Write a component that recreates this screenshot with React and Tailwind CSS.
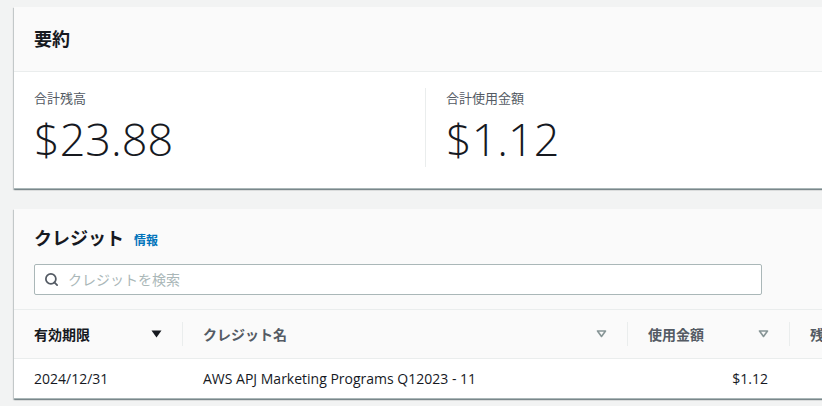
import { Search } from "lucide-react";

const font = { fontFamily: '"Open Sans", "Noto Sans CJK JP", sans-serif' };

const cardShadow =
  "shadow-[0_1px_1px_0_rgba(0,28,36,0.3),1px_1px_1px_0_rgba(0,28,36,0.15),-1px_1px_1px_0_rgba(0,28,36,0.15)]";

const SortDown = ({ active }) => (
  <svg width="11" height="8" viewBox="0 0 11 8" className="shrink-0">
    {active ? (
      <path d="M0.5 0.5 H10.5 L5.5 7.5 Z" fill="#16191f" />
    ) : (
      <path d="M1.5 1 H9.5 L5.5 6.5 Z" fill="none" stroke="#879596" strokeWidth="1.6" strokeLinejoin="round" />
    )}
  </svg>
);

const Summary = () => (
  <div className={`bg-white ${cardShadow} border-b border-[#aab7b8]`}>
    <div className="h-[65px] px-5 flex items-center bg-[#fafafa] border-b border-[#eaeded]">
      <h2 className="text-[18px] font-bold text-[#16191f]">要約</h2>
    </div>
    <div className="grid grid-cols-2 pt-4 pb-[21px]">
      <div className="px-5">
        <div className="text-[13px] leading-5 text-[#545b64]">合計残高</div>
        <div className="mt-[3px] text-[45px] leading-[56px] font-light text-[#16191f]">$23.88</div>
      </div>
      <div className="px-5 border-l border-[#eaeded]">
        <div className="text-[13px] leading-5 text-[#545b64]">合計使用金額</div>
        <div className="mt-[3px] text-[45px] leading-[56px] font-light text-[#16191f]">$1.12</div>
      </div>
    </div>
  </div>
);

const HeaderCell = ({ label, width, last }) => (
  <div className={`${width} shrink-0 h-full flex items-center pl-5`}>
    <div className={`flex-1 flex items-center justify-between pr-5 ${last ? "" : "border-r border-[#eaeded]"} h-[24px]`}>
      <span className="text-[14px] font-bold text-[#545b64]">{label}</span>
      {!last && <SortDown />}
    </div>
  </div>
);

const Credits = () => (
  <div className={`bg-white ${cardShadow} border-b border-[#aab7b8]`}>
    <div className="bg-[#fafafa] px-5 pt-[15px] pb-[14px] border-b border-[#eaeded]">
      <div className="flex items-baseline gap-[10px] h-[40px] pt-[1px]">
        <h2 className="text-[18px] font-bold text-[#16191f]">クレジット</h2>
        <a className="text-[12px] font-bold text-[#0073bb]">情報</a>
      </div>
      <div className="w-[728px] h-[31px] bg-white border border-[#aab7b8] rounded-[2px] flex items-center px-[9px] gap-[9px]">
        <Search size={15} strokeWidth={2.8} className="text-[#545b64]" />
        <span className="text-[14px] text-[#aab7b8]">クレジットを検索</span>
      </div>
    </div>
    <div className="flex h-[49px] bg-[#fafafa] border-b border-[#eaeded]">
      <div className="w-[169px] shrink-0 h-full flex items-center pl-5">
        <div className="flex-1 flex items-center justify-between pr-5 border-r border-[#eaeded] h-[24px]">
          <span className="text-[14px] font-bold text-[#16191f]">有効期限</span>
          <SortDown active />
        </div>
      </div>
      <HeaderCell label="クレジット名" width="w-[445px]" />
      <HeaderCell label="使用金額" width="w-[162px]" />
      <HeaderCell label="残高" width="w-[120px]" last />
    </div>
    <div className="flex h-[39px] items-center text-[14px] text-[#16191f]">
      <div className="w-[169px] shrink-0 pl-5">2024/12/31</div>
      <div className="w-[445px] shrink-0 pl-5">AWS APJ Marketing Programs Q12023 - 11</div>
      <div className="w-[162px] shrink-0 pr-[22px] text-right">$1.12</div>
      <div className="w-[120px] shrink-0 pl-5"></div>
    </div>
  </div>
);

export default function App() {
  return (
    <div className="w-[822px] h-[406px] overflow-hidden bg-[#f2f3f3]" style={font}>
      <div className="w-[822px] ml-[14px] pt-[7px] flex flex-col gap-[20px]">
        <Summary />
        <Credits />
      </div>
    </div>
  );
}
